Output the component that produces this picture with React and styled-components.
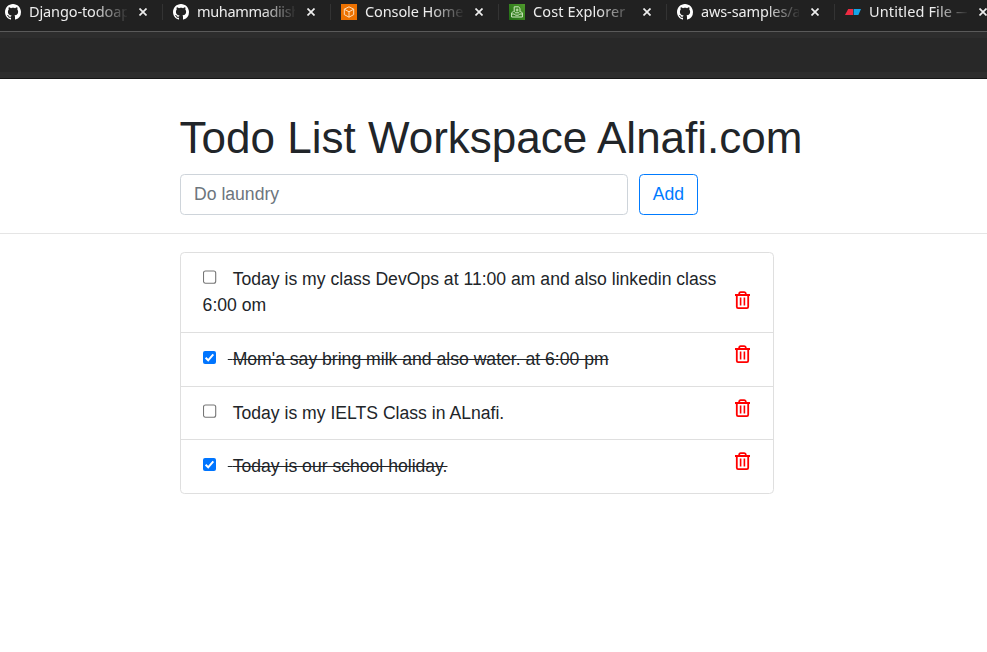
import React from 'react';
import styled, { createGlobalStyle } from 'styled-components';

const Global = createGlobalStyle`
  *, *::before, *::after { box-sizing: border-box; }
  body {
    margin: 0;
    background: #fff;
    color: #212529;
    font: 17.6px/26.4px "Liberation Sans", Arial, sans-serif;
    overflow: hidden;
  }
`;

const TabStrip = styled.nav`
  display: flex;
  height: 31px;
  padding-top: 3px;
  overflow: hidden;
  background: #212121;
`;

const Tab = styled.div`
  display: flex;
  flex: 0 0 168px;
  align-items: center;
  height: 18px;
  padding-left: 5px;
`;

const TabIcon = styled.svg`
  flex: none;
  width: 16px;
  height: 16px;
  margin-right: 8px;
`;

const TabTitle = styled.span`
  flex: none;
  width: 98px;
  height: 20px;
  overflow: hidden;
  white-space: nowrap;
  color: #ededed;
  font: 14.5px/18px "Noto Sans", sans-serif;
  letter-spacing: ${(p) => p.$spacing || 0}px;
  mask-image: linear-gradient(to right, #000 65px, transparent 100px);
`;

const CloseIcon = styled.svg`
  flex: none;
  width: 8px;
  height: 8px;
  margin-left: 12px;
`;

const TabDivider = styled.span`
  width: 1px;
  height: 16px;
  margin-left: 15px;
  background: #333;
`;

const Toolbar = styled.div`
  height: 48px;
  background: #282828;
  border-top: 1px solid #5a5a5a;
  border-bottom: 1px solid #161616;
  box-shadow: inset 0 6px #2d2d2d, inset 0 -6px #2d2d2d;
`;

const Header = styled.header`
  height: 155px;
  padding: 32px 0 0 180px;
  border-bottom: 1px solid #e5e5e5;
`;

const Title = styled.h1`
  margin: 0 0 10px -0.4px;
  font-size: 44px;
  font-weight: 400;
  line-height: 53px;
`;

const AddForm = styled.form`
  display: flex;
  gap: 11px;
`;

const TodoInput = styled.input`
  width: 448px;
  height: 41px;
  padding: 0 13px;
  color: #495057;
  font: inherit;
  border: 1px solid #ced4da;
  border-radius: 4.4px;
  &::placeholder { color: #6c757d; opacity: 1; }
`;

const AddButton = styled.button`
  width: 59px;
  height: 41px;
  padding: 0;
  color: #007bff;
  font: inherit;
  background: #fff;
  border: 1px solid #007bff;
  border-radius: 4.4px;
`;

const List = styled.ul`
  width: 594px;
  margin: 18px 0 0 180px;
  padding: 0;
  list-style: none;
  border: 1px solid #dfdfdf;
  border-radius: 4.4px;
`;

const Item = styled.li`
  display: flex;
  justify-content: space-between;
  height: ${(p) => p.$height}px;
  padding: 13px 22.5px 0 21.6px;
  & + & { border-top: 1px solid #dfdfdf; }
`;

const ItemText = styled.label`
  width: 522px;
  text-decoration: ${(p) => (p.$done ? 'line-through' : 'none')};
`;

const CheckSlot = styled.span`
  display: inline-block;
  width: 25.2px;
  height: 14px;
  vertical-align: 1px;
`;

const Check = styled.svg`
  display: block;
  width: 14px;
  height: 14px;
`;

const DeleteButton = styled.button`
  flex: none;
  width: 16px;
  height: 18px;
  margin-top: ${(p) => p.$offset}px;
  padding: 0;
  background: none;
  border: 0;
  svg { display: block; overflow: visible; }
`;

const GITHUB =
  'M8 0C3.58 0 0 3.58 0 8c0 3.54 2.29 6.53 5.47 7.59.4.07.55-.17.55-.38 0-.19-.01-.82-.01-1.49-2.01.37-2.53-.49-2.69-.94-.09-.23-.48-.94-.82-1.13-.28-.15-.68-.52-.01-.53.63-.01 1.08.58 1.23.82.72 1.21 1.87.87 2.33.66.07-.52.28-.87.51-1.07-1.78-.2-3.64-.89-3.64-3.95 0-.87.31-1.59.82-2.15-.08-.2-.36-1.02.08-2.12 0 0 .67-.21 2.2.82.64-.18 1.32-.27 2-.27s1.36.09 2 .27c1.53-1.04 2.2-.82 2.2-.82.44 1.1.16 1.92.08 2.12.51.56.82 1.27.82 2.15 0 3.07-1.87 3.75-3.65 3.95.29.25.54.73.54 1.48 0 1.07-.01 1.93-.01 2.2 0 .21.15.46.55.38A8.01 8.01 0 0 0 16 8c0-4.42-3.58-8-8-8z';

const icons = {
  github: <path fill="#fff" d={GITHUB} />,
  console: (
    <>
      <rect width="16" height="16" fill="#ed7100" />
      <path d="M8 2.8 12.7 5.2v5.4L8 13.2l-4.7-2.6V5.2zM3.3 5.2 8 7.8l4.7-2.6M8 7.8v5.4" fill="none" stroke="#ffe0bd" strokeWidth="1" />
    </>
  ),
  cost: (
    <>
      <defs>
        <linearGradient id="cost-fill" x1="0" y1="1" x2="1" y2="0">
          <stop offset="0" stopColor="#1f6b13" />
          <stop offset="1" stopColor="#4f9a2c" />
        </linearGradient>
      </defs>
      <rect width="16" height="16" fill="url(#cost-fill)" />
      <path d="M5.2 8.2V2.8h4.2l1.6 1.5v3.9M4.4 7.2 2.6 9v4h10.8V9l-1.8-1.8M2.8 10h2.6l1 1.2h3.2l1-1.2h2.6M6 8.8h4M8.1 4.5v3M6.8 6h2.7" fill="none" stroke="#cfe8c2" strokeWidth="1" />
    </>
  ),
  file: (
    <>
      <path d="M3.2 5H8v6H0z" fill="#ee2b42" />
      <path d="M8.6 5H16l-2.6 6H8.6z" fill="#12a5e8" />
    </>
  ),
};

const tabs = [
  { icon: 'github', title: 'Django-todoap', spacing: -0.12 },
  { icon: 'github', title: 'muhammadiish', spacing: -0.35 },
  { icon: 'console', title: 'Console Home', spacing: -0.1 },
  { icon: 'cost', title: 'Cost Explorer', spacing: 0.12 },
  { icon: 'github', title: 'aws-samples/a', spacing: -0.12 },
  { icon: 'file', title: 'Untitled File —', spacing: 0.12 },
];

const todos = [
  { text: 'Today is my class DevOps at 11:00 am and also linkedin class 6:00 om', height: 79, offset: 25 },
  { text: "Mom'a say bring milk and also water. at 6:00 pm", done: true, height: 54, offset: -1 },
  { text: 'Today is my IELTS Class in ALnafi.', height: 53, offset: -1 },
  { text: 'Today is our school holiday.', done: true, height: 54, offset: -1 },
];

function Checkbox({ checked }) {
  return (
    <Check viewBox="0 0 14 14" role="checkbox" aria-checked={!!checked}>
      {checked ? (
        <>
          <rect x="0" y="1" width="13" height="13" rx="2" fill="#0075ff" />
          <path d="m2.6 7.8 2.6 2.5 5.1-6" fill="none" stroke="#fff" strokeWidth="2" />
        </>
      ) : (
        <rect x=".5" y="1" width="12.2" height="12.2" rx="2" fill="#fff" stroke="#767676" strokeWidth="1.1" />
      )}
    </Check>
  );
}

function Trash() {
  return (
    <svg width="16" height="18" viewBox="0.5 0 16 18" fill="none" stroke="#f00">
      <path d="M.5 4h15M4.7 4V2.8Q4.7 1.2 6.2 1.2h3.6q1.5 0 1.5 1.6V4M2.3 4v11.8q0 1.3 1.3 1.3h8.8q1.3 0 1.3-1.3V4" strokeWidth="1.8" />
      <path d="M6.1 6.5v8M9.9 6.5v8" strokeWidth="1.6" />
    </svg>
  );
}

export default function App() {
  return (
    <>
      <Global />
      <TabStrip>
        {tabs.map((tab) => (
          <Tab key={tab.title}>
            <TabIcon viewBox="0 0 16 16">{icons[tab.icon]}</TabIcon>
            <TabTitle $spacing={tab.spacing}>{tab.title}</TabTitle>
            <CloseIcon viewBox="0 0 8 8">
              <path d="m.5.5 7 7M7.5.5l-7 7" stroke="#eee" strokeWidth="1.7" />
            </CloseIcon>
            <TabDivider />
          </Tab>
        ))}
      </TabStrip>
      <Toolbar />
      <Header>
        <Title>Todo List Workspace Alnafi.com</Title>
        <AddForm>
          <TodoInput placeholder="Do laundry" />
          <AddButton type="button">Add</AddButton>
        </AddForm>
      </Header>
      <List>
        {todos.map((todo) => (
          <Item key={todo.text} $height={todo.height}>
            <ItemText $done={todo.done}>
              <CheckSlot><Checkbox checked={todo.done} /></CheckSlot>
              &nbsp;{todo.text}
            </ItemText>
            <DeleteButton $offset={todo.offset} aria-label="Delete"><Trash /></DeleteButton>
          </Item>
        ))}
      </List>
    </>
  );
}
